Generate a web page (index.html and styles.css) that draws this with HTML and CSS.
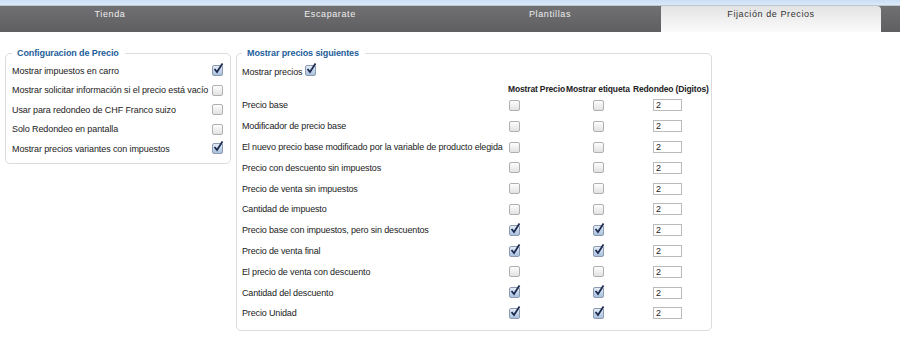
FILE: index.html
```html
<!DOCTYPE html>
<html lang="es">
<head>
  <meta charset="UTF-8" />
  <title>Fijación de Precios</title>
  <link rel="stylesheet" href="styles.css">
</head>
<body>
  <div class="topline"></div>
  <nav class="tabs">
    <div class="tab">Tienda</div>
    <div class="tab">Escaparate</div>
    <div class="tab">Plantillas</div>
    <div class="tab active">Fijación de Precios</div>
  </nav>

  <div class="content">
    <fieldset class="box left">
      <legend>Configuracion de Precio</legend>
      <div class="row"><span>Mostrar impuestos en carro</span><span class="cb on"><svg viewBox="0 0 12 12"><path d="M2.5 6 L5 9 L10.5 0.5"/></svg></span></div>
      <div class="row"><span>Mostrar solicitar información si el precio está vacío</span><span class="cb"></span></div>
      <div class="row"><span>Usar para redondeo de CHF Franco suizo</span><span class="cb"></span></div>
      <div class="row"><span>Solo Redondeo en pantalla</span><span class="cb"></span></div>
      <div class="row"><span>Mostrar precios variantes con impuestos</span><span class="cb on"><svg viewBox="0 0 12 12"><path d="M2.5 6 L5 9 L10.5 0.5"/></svg></span></div>
    </fieldset>

    <fieldset class="box right">
      <legend>Mostrar precios siguientes</legend>
      <div class="show">Mostrar precios <span class="cb on"><svg viewBox="0 0 12 12"><path d="M2.5 6 L5 9 L10.5 0.5"/></svg></span></div>
      <div class="grid" id="grid">
        <div class="head"></div>
        <div class="head">Mostrat Precio</div>
        <div class="head">Mostrar etiqueta</div>
        <div class="head">Redondeo (Digitos)</div>
      </div>
    </fieldset>
  </div>

  <script>
    var rows = [
      ["Precio base", 0, 0],
      ["Modificador de precio base", 0, 0],
      ["El nuevo precio base modificado por la variable de producto elegida", 0, 0],
      ["Precio con descuento sin impuestos", 0, 0],
      ["Precio de venta sin impuestos", 0, 0],
      ["Cantidad de impuesto", 0, 0],
      ["Precio base con impuestos, pero sin descuentos", 1, 1],
      ["Precio de venta final", 1, 1],
      ["El precio de venta con descuento", 0, 0],
      ["Cantidad del descuento", 1, 1],
      ["Precio Unidad", 1, 1]
    ];
    var tick = '<svg viewBox="0 0 12 12"><path d="M2.5 6 L5 9 L10.5 0.5"/></svg>';
    var grid = document.getElementById("grid");
    rows.forEach(function (r) {
      var html = '<div class="label">' + r[0] + '</div>';
      html += '<div class="c1"><span class="cb' + (r[1] ? ' on">' + tick : '">') + '</span></div>';
      html += '<div class="c2"><span class="cb' + (r[2] ? ' on">' + tick : '">') + '</span></div>';
      html += '<div class="c3"><input type="text" value="2"></div>';
      grid.insertAdjacentHTML("beforeend", html);
    });
  </script>
</body>
</html>
```

FILE: styles.css
```css
body {
  margin: 0;
  background: #fff;
  color: #222;
  font-family: 'Liberation Sans', Arial, sans-serif;
  font-size: 9px;
}
.topline {
  height: 5px;
  background: linear-gradient(#c9def5, #dce9f8);
  border-bottom: 1px solid #b9c6d4;
}
.tabs {
  display: flex;
  height: 26px;
  background: linear-gradient(#707072, #5f5f61);
}
.tab {
  width: 220px;
  text-align: center;
  color: #eee;
  padding-top: 3px;
  letter-spacing: 0.6px;
}
.tab.active {
  margin-left: 1px;
  color: #333;
  background: linear-gradient(#e4e3e4, #fbfbfb);
  border-top-right-radius: 4px;
  border-top-left-radius: 1px;
}
.content {
  display: flex;
  align-items: flex-start;
  gap: 5px;
  padding: 16px 5px;
  letter-spacing: -0.1px;
}
.box {
  margin: 0;
  min-width: 0;
  border: 1px solid #dcdcdc;
  border-radius: 5px;
  padding: 3px 7px 4px 6px;
}
.box legend {
  margin-left: 0;
  padding: 0 6px 0 5px;
  font-weight: bold;
  color: #1d5d9a;
}
.left {
  width: 211px;
}
.row {
  display: flex;
  justify-content: space-between;
  align-items: center;
  height: 19.5px;
  white-space: nowrap;
}
.right {
  width: 461px;
  padding: 2px 8px 6px 5px;
}
.cb {
  position: relative;
  display: inline-block;
  flex: none;
  width: 9px;
  height: 9px;
  border: 1px solid #b0b0b0;
  border-radius: 2px;
  background: linear-gradient(#fdfdfd, #e2e2e2);
  vertical-align: middle;
}
.cb.on {
  border-color: #8d9ab0;
  background: linear-gradient(#e4edf8, #a8c0de);
}
.cb svg {
  position: absolute;
  left: -1px;
  top: -3px;
  width: 12px;
  height: 12px;
}
.cb svg path {
  fill: none;
  stroke: #1c2a4f;
  stroke-width: 1.8;
}
.show {
  height: 18px;
  padding-top: 3px;
  line-height: 18px;
}
.show .cb {
  margin-top: -4px;
}
.grid {
  display: grid;
  grid-template-columns: 266px 58px 67px auto;
  grid-template-rows: 14px;
  grid-auto-rows: 20.8px;
  align-items: center;
  white-space: nowrap;
}
.grid .head {
  font-weight: bold;
  font-size: 8.5px;
  line-height: 12px;
  letter-spacing: -0.15px;
  align-self: end;
}
.label {
  letter-spacing: -0.15px;
}
.c1 {
  padding-left: 1px;
}
.c2 {
  padding-left: 27px;
}
.c3 {
  padding-left: 20px;
}
.c3 input {
  box-sizing: border-box;
  display: block;
  width: 29px;
  height: 12px;
  padding: 0 2px;
  border: 1px solid #bbb;
  font-family: 'Liberation Sans', Arial, sans-serif;
  font-size: 9px;
  color: #222;
}
```
